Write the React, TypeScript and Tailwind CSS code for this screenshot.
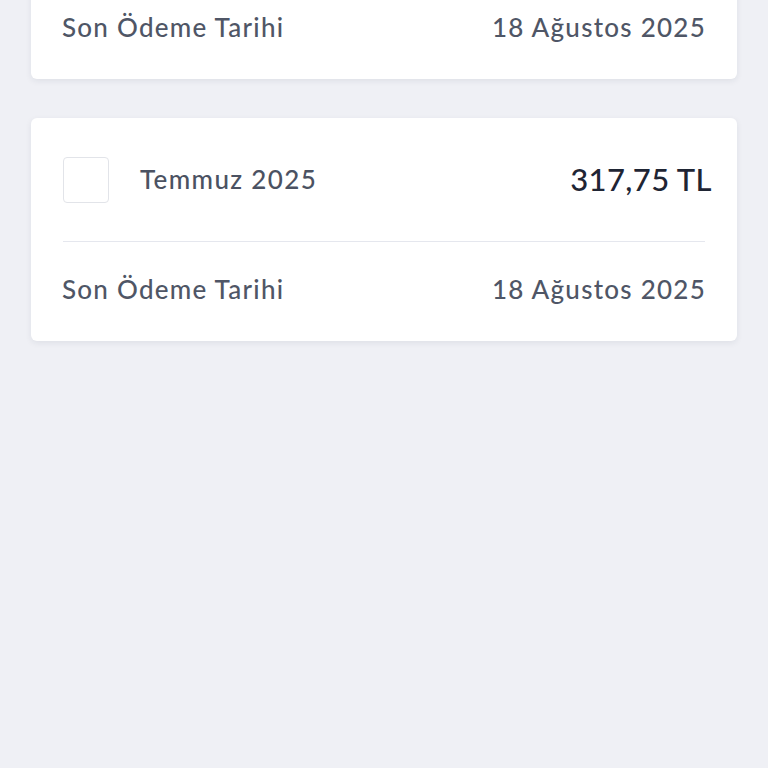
import React from "react";

function Card({ month, amount, date }: { month?: string; amount?: string; date: string }) {
  return (
    <div className="bg-white rounded-[6px] shadow-[0_2px_6px_rgba(30,40,70,0.08)] px-8">
      <div className="h-[123px] flex items-center">
        <div className="w-[46px] h-[46px] rounded-[4px] border-[1.5px] border-[#e2e4e9] bg-white shrink-0" />
        {month && (
          <div className="ml-[31px] text-[26px] font-medium text-[#4b5262] tracking-[1.35px]">{month}</div>
        )}
        {amount && (
          <div className="ml-auto mr-[-7px] text-[31px] font-medium text-[#1f2534] tracking-[0.4px]">{amount}</div>
        )}
      </div>
      <div className="h-px bg-[#e5e7ee]" />
      <div className="h-[99px] flex items-center justify-between pb-[5px] text-[26px] font-medium text-[#4f5666] tracking-[1.25px]">
        <span className="-ml-px">Son Ödeme Tarihi</span>
        <span className="-mr-px">{date}</span>
      </div>
    </div>
  );
}

export default function App() {
  return (
    <div
      className="w-[768px] h-[768px] overflow-hidden bg-[#eff0f5]"
      style={{ fontFamily: "Lato, 'Noto Sans', sans-serif" }}
    >
      <div className="mt-[-144px] px-[31px] flex flex-col gap-[39px]">
        <Card date="18 Ağustos 2025" />
        <Card month="Temmuz 2025" amount="317,75 TL" date="18 Ağustos 2025" />
      </div>
    </div>
  );
}
